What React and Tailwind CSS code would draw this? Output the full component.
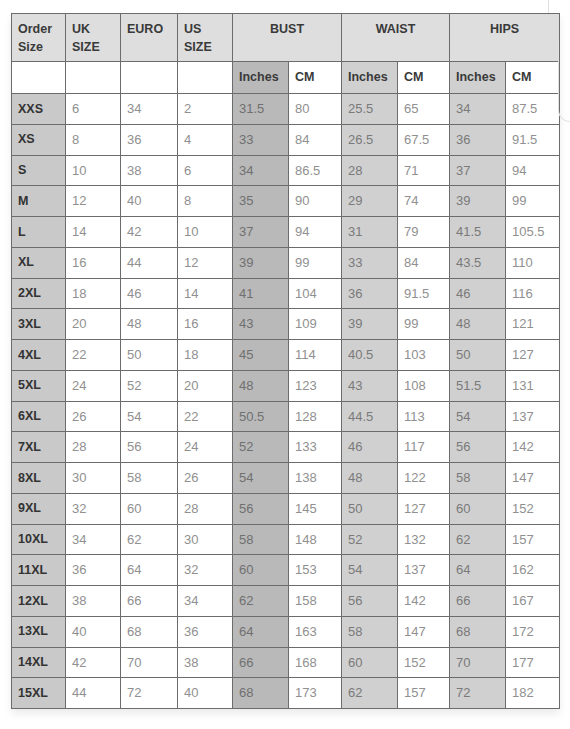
import React from 'react';

const rows = [
    ['XXS', '6', '34', '2', '31.5', '80', '25.5', '65', '34', '87.5'],
    ['XS', '8', '36', '4', '33', '84', '26.5', '67.5', '36', '91.5'],
    ['S', '10', '38', '6', '34', '86.5', '28', '71', '37', '94'],
    ['M', '12', '40', '8', '35', '90', '29', '74', '39', '99'],
    ['L', '14', '42', '10', '37', '94', '31', '79', '41.5', '105.5'],
    ['XL', '16', '44', '12', '39', '99', '33', '84', '43.5', '110'],
    ['2XL', '18', '46', '14', '41', '104', '36', '91.5', '46', '116'],
    ['3XL', '20', '48', '16', '43', '109', '39', '99', '48', '121'],
    ['4XL', '22', '50', '18', '45', '114', '40.5', '103', '50', '127'],
    ['5XL', '24', '52', '20', '48', '123', '43', '108', '51.5', '131'],
    ['6XL', '26', '54', '22', '50.5', '128', '44.5', '113', '54', '137'],
    ['7XL', '28', '56', '24', '52', '133', '46', '117', '56', '142'],
    ['8XL', '30', '58', '26', '54', '138', '48', '122', '58', '147'],
    ['9XL', '32', '60', '28', '56', '145', '50', '127', '60', '152'],
    ['10XL', '34', '62', '30', '58', '148', '52', '132', '62', '157'],
    ['11XL', '36', '64', '32', '60', '153', '54', '137', '64', '162'],
    ['12XL', '38', '66', '34', '62', '158', '56', '142', '66', '167'],
    ['13XL', '40', '68', '36', '64', '163', '58', '147', '68', '172'],
    ['14XL', '42', '70', '38', '66', '168', '60', '152', '70', '177'],
    ['15XL', '44', '72', '40', '68', '173', '62', '157', '72', '182'],
];

const widths = ['w-[54px]', 'w-[55px]', 'w-[57px]', 'w-[55px]', 'w-[56px]', 'w-[53px]', 'w-[56px]', 'w-[52px]', 'w-[56px]', 'w-[54px]'];

// background per column for body rows
const cellBg = (i) => {
    if (i === 0) return 'bg-[#c9c9c9] text-[#333] font-bold text-[12.5px]';
    if (i === 4) return 'bg-[#b9b9b9] text-[#707070]';
    if (i === 6 || i === 8) return 'bg-[#d0d0d0] text-[#7a7a7a]';
    return 'bg-white text-[#909090]';
};

const cell = 'border border-[#6c6c6c] pl-[6px] text-left';

export default function App() {
    return (
        <div className="w-[570px] h-[729px] bg-white relative overflow-hidden" style={{ fontFamily: '"Liberation Sans", Arial, sans-serif' }}>
            <div className="pt-[13px] pl-[11px]">
                <table className="border-collapse table-fixed w-[548px] text-[13px] shadow-[0_5px_8px_rgba(0,0,0,0.08)]">
                    <colgroup>
                        {widths.map((w, i) => <col key={i} className={w} />)}
                    </colgroup>
                    <thead>
                        <tr className="h-[48px] bg-[#dedede] text-[#3a3a3a] text-[12.5px] font-bold leading-[18px]">
                            <th className={`${cell} align-top pt-[6px] font-bold`}>Order<br />Size</th>
                            <th className={`${cell} align-top pt-[6px] font-bold`}>UK<br />SIZE</th>
                            <th className={`${cell} align-top pt-[6px] font-bold`}>EURO</th>
                            <th className={`${cell} align-top pt-[6px] font-bold`}>US<br />SIZE</th>
                            <th colSpan={2} className="border border-[#6c6c6c] align-top pt-[6px] text-center font-bold">BUST</th>
                            <th colSpan={2} className="border border-[#6c6c6c] align-top pt-[6px] text-center font-bold">WAIST</th>
                            <th colSpan={2} className="border border-[#6c6c6c] align-top pt-[6px] text-center font-bold">HIPS</th>
                        </tr>
                        <tr className="h-[32px] text-[#3a3a3a] text-[12.5px] font-bold">
                            <th className={`${cell} bg-white`}></th>
                            <th className={`${cell} bg-white`}></th>
                            <th className={`${cell} bg-white`}></th>
                            <th className={`${cell} bg-white`}></th>
                            <th className={`${cell} bg-[#b9b9b9] font-bold`}>Inches</th>
                            <th className={`${cell} bg-white font-bold`}>CM</th>
                            <th className={`${cell} bg-[#d0d0d0] font-bold`}>Inches</th>
                            <th className={`${cell} bg-white font-bold`}>CM</th>
                            <th className={`${cell} bg-[#d0d0d0] font-bold`}>Inches</th>
                            <th className={`${cell} bg-white font-bold`}>CM</th>
                        </tr>
                    </thead>
                    <tbody>
                        {rows.map((r) => (
                            <tr key={r[0]} className="h-[30.75px]">
                                {r.map((v, i) => (
                                    <td key={i} className={`${cell} ${cellBg(i)}`}>{v}</td>
                                ))}
                            </tr>
                        ))}
                    </tbody>
                </table>
            </div>
            {/* page curl at the right edge */}
            <div className="absolute left-[548px] top-0 w-px h-[13px] bg-[#e0e0e0]" />
            <div className="absolute right-0 top-[40px] w-[12px] h-[82px] border-l border-b border-[#e2e2e2] rounded-bl-[14px]" />
        </div>
    );
}
